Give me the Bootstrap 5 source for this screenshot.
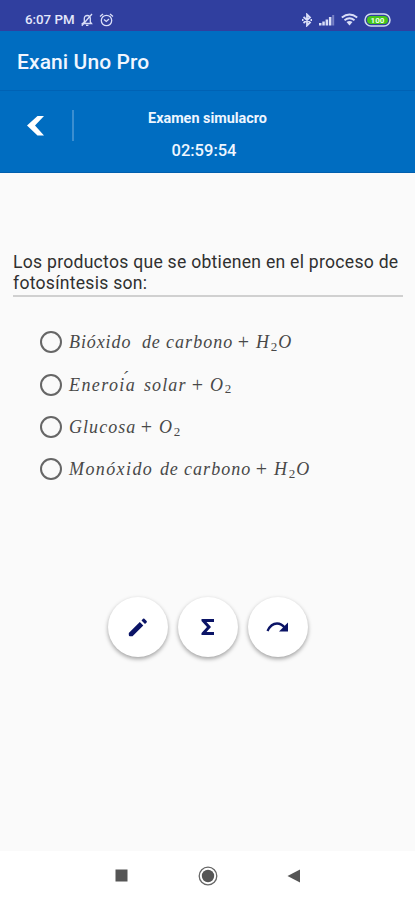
<!DOCTYPE html>
<html lang="es">
<head>
<meta charset="utf-8">
<meta name="viewport" content="width=device-width, initial-scale=1">
<title>Exani Uno Pro</title>
<link href="https://cdn.jsdelivr.net/npm/bootstrap@5.3.0/dist/css/bootstrap.min.css" rel="stylesheet">
<style>
body{font-family:Roboto,"Liberation Sans",sans-serif;background:#fafafa;color:#303030;height:900px;overflow:hidden}
svg{display:block;flex:none}
.status{height:31px;background:#303f9f;color:#e4e8fb;padding:8px 24px 0 25px}
.clock{font-size:13.3px;line-height:24px;font-weight:500}
.gap-icon{margin-left:6px}
.brandbar{height:60px;background:#006dc1;padding-left:17px;border-bottom:1px solid #0062b4}
.brandbar h1{font-size:21px;font-weight:500;line-height:62px;color:#f0f6ff;letter-spacing:.1px}
.exambar{height:82px;background:#006dc1;border-bottom:1px solid #005fae;color:#eef6ff}
.side{width:74px;padding:19px 0 0 27px}
.exam-info{padding-right:74px}
.rule{width:2px;height:31px;background:#3b8ed0}
.exam-name{font-size:14.4px;font-weight:700;line-height:16px;margin-top:20px}
.timer{font-size:16.5px;line-height:20px;margin-top:14px;padding-right:7px;font-weight:500}
.question{margin:79px 12px 0 13px;border-bottom:2px solid #d0d0d0;height:45px;font-size:17.6px;line-height:21px;letter-spacing:.26px;white-space:nowrap}
.options{padding:24px 0 0 40px}
.option{height:42.4px;gap:7px}
.ring{width:22px;height:22px;border:2px solid #666;border-radius:50%;flex:none}
.tex{font:italic 18px/24px "Liberation Serif",serif;color:#484848;white-space:nowrap}
.tex span{display:block}
.w1{width:73px;letter-spacing:.9px}
.w2{width:75px;letter-spacing:1.400px}
.w3{width:71px;letter-spacing:1.050px}
.w4{width:91px;letter-spacing:1.400px}
.wde{width:24px;letter-spacing:.8px}
.wcar{width:71px;letter-spacing:1.050px}
.wsol{width:47px;letter-spacing:1.100px}
.formula{margin-left:6px;letter-spacing:.8px}
.tex .plus{font-style:normal;font-size:20px;width:13px;text-align:center}
.tex sub{font-style:normal;font-size:13px;bottom:-.22em;margin:0 0 0 1px}
.tex .accent{position:absolute;left:53px;top:-7px}
.tools{gap:10px;margin-top:106px}
.round{width:60px;height:60px;border-radius:50%;background:#fff;border:0;padding:0;box-shadow:0 2px 4px rgba(0,0,0,.36)}
.sysnav{height:49px;background:#fff;padding:0 115px}
</style>
</head>
<body class="d-flex flex-column">
<header>
 <div class="status d-flex justify-content-between">
  <div class="d-flex align-items-center">
   <span class="clock">6:07 PM</span>
   <svg class="gap-icon" width="12" height="14" viewBox="0 0 12 14" fill="none" stroke="#d9def8" stroke-width="1.3"><path d="M1.5 10.5h9L9.3 9V5.5C9.3 3.6 8 2.5 6.300 2.500S3.300 3.600 3.300 5.500V9zM5 12.400h2.400M.8 12.800L11 1"/></svg>
   <svg class="gap-icon" width="15" height="14" viewBox="0 0 15 14" fill="none" stroke="#d9def8" stroke-width="1.3"><circle cx="7.500" cy="7.500" r="5.200"/><path d="M1 3.500L4 1M14 3.500L11 1M5 6.500l2.300 2L10 6"/></svg>
  </div>
  <div class="d-flex align-items-center">
   <svg width="12" height="14" viewBox="0 0 12 14" fill="none" stroke="#d9def8" stroke-width="1.8"><path d="M2.500 4L9 9.500 6 12.500v-11L9 4.500 2.500 10M1 7h1.500M9.500 7H11"/></svg>
   <svg class="gap-icon" width="16" height="12" viewBox="0 0 16 12" fill="#d9def8"><path d="M0 9h2.500v2.500H0zM3.300 7.500h2.500v4H3.300zM6.600 5.500h2.500v6H6.600zM9.900 3h2.500v8.500H9.900z"/><path fill="#7882c5" d="M13.200 1h2v10.500h-2z"/></svg>
   <svg class="gap-icon" width="17" height="13" viewBox="0 0 17 13" fill="none" stroke="#d9def8" stroke-width="1.900"><path d="M.8 4.500Q8.500-1.500 16.200 4.500M3.500 7.200Q8.500 3.200 13.500 7.200"/><path d="M5.500 9Q8.500 6.800 11.500 9L8.500 12.500z" fill="#d9def8" stroke="none"/></svg>
   <svg class="gap-icon" width="27" height="14" viewBox="0 0 27 14"><rect x="1" y="1" width="25" height="12" rx="6" fill="#303f9f" stroke="#d2dcf0" stroke-width="1.500"/><rect x="3" y="3" width="21" height="8" rx="4" fill="#45c51b"/><text x="13.500" y="10" text-anchor="middle" font-family="Roboto" font-size="8" font-weight="700" fill="#efffe9">100</text></svg>
  </div>
 </div>
 <div class="brandbar"><h1 class="m-0">Exani Uno Pro</h1></div>
 <div class="exambar d-flex">
  <div class="side d-flex justify-content-between">
   <svg width="18" height="32" viewBox="0 0 18 32"><path d="M10.500 6H17L8 15.600 17 25.500H10.500L0 15.600z" fill="#fff"/></svg>
   <div class="rule"></div>
  </div>
  <div class="exam-info flex-fill text-center">
   <div class="exam-name">Examen simulacro</div>
   <div class="timer">02:59:54</div>
  </div>
 </div>
</header>
<main class="flex-grow-1">
 <p class="question mb-0">Los productos que se obtienen en el proceso de<br>fotosíntesis son:</p>
 <div class="options">
  <div class="option d-flex align-items-center"><div class="ring"></div><div class="tex d-flex"><span class="w1">Bióxido</span><span class="wde">de</span><span class="wcar">carbono</span><span class="plus">+</span><span class="formula">H<sub>2</sub>O</span></div></div>
  <div class="option d-flex align-items-center"><div class="ring"></div><div class="tex d-flex"><span class="w2 position-relative">Eneroia<span class="accent">´</span></span><span class="wsol">solar</span><span class="plus">+</span><span class="formula">O<sub>2</sub></span></div></div>
  <div class="option d-flex align-items-center"><div class="ring"></div><div class="tex d-flex"><span class="w3">Glucosa</span><span class="plus">+</span><span class="formula">O<sub>2</sub></span></div></div>
  <div class="option d-flex align-items-center"><div class="ring"></div><div class="tex d-flex"><span class="w4">Monóxido</span><span class="wde">de</span><span class="wcar">carbono</span><span class="plus">+</span><span class="formula">H<sub>2</sub>O</span></div></div>
 </div>
 <div class="tools d-flex justify-content-center">
  <button class="round d-flex align-items-center justify-content-center" aria-label="Editar"><svg width="20" height="20" viewBox="0 0 20 20" fill="#0b1466"><path d="M.8 16L11.800 5l3.500 3.500L4.500 19.300H2Q.8 19.300.8 18zM13.500 3.500l1.500-1.700q.7-.7 1.400 0l2.200 2.200q.7.7 0 1.400L17 7z"/></svg></button>
  <button class="round d-flex align-items-center justify-content-center" aria-label="Fórmulas"><svg width="14" height="18" viewBox="0 0 14 18" fill="#0b1466"><path d="M.5 1H13v3H5.500l4.500 5-4.500 5H13v3H.5v-2L6 9 .5 3z"/></svg></button>
  <button class="round d-flex align-items-center justify-content-center" aria-label="Siguiente"><svg width="23" height="14" viewBox="0 0 23 14"><path d="M1.500 11Q5 3.500 11 3.500q4.500 0 8 4.500" fill="none" stroke="#0b1466" stroke-width="2.300"/><path d="M22 2.500v9h-9z" fill="#0b1466"/></svg></button>
 </div>
</main>
<nav class="sysnav d-flex align-items-center justify-content-between">
 <svg width="13" height="13"><rect x=".5" y=".5" width="12" height="12" fill="#555"/></svg>
 <svg width="20" height="20"><circle cx="10" cy="10" r="8.800" fill="none" stroke="#666" stroke-width="1.300"/><circle cx="10" cy="10" r="6.200" fill="#555"/></svg>
 <svg width="13" height="14"><path d="M13 .5v13L.5 7z" fill="#555"/></svg>
</nav>
<script src="https://cdn.jsdelivr.net/npm/bootstrap@5.3.0/dist/js/bootstrap.bundle.min.js"></script>
</body>
</html>
